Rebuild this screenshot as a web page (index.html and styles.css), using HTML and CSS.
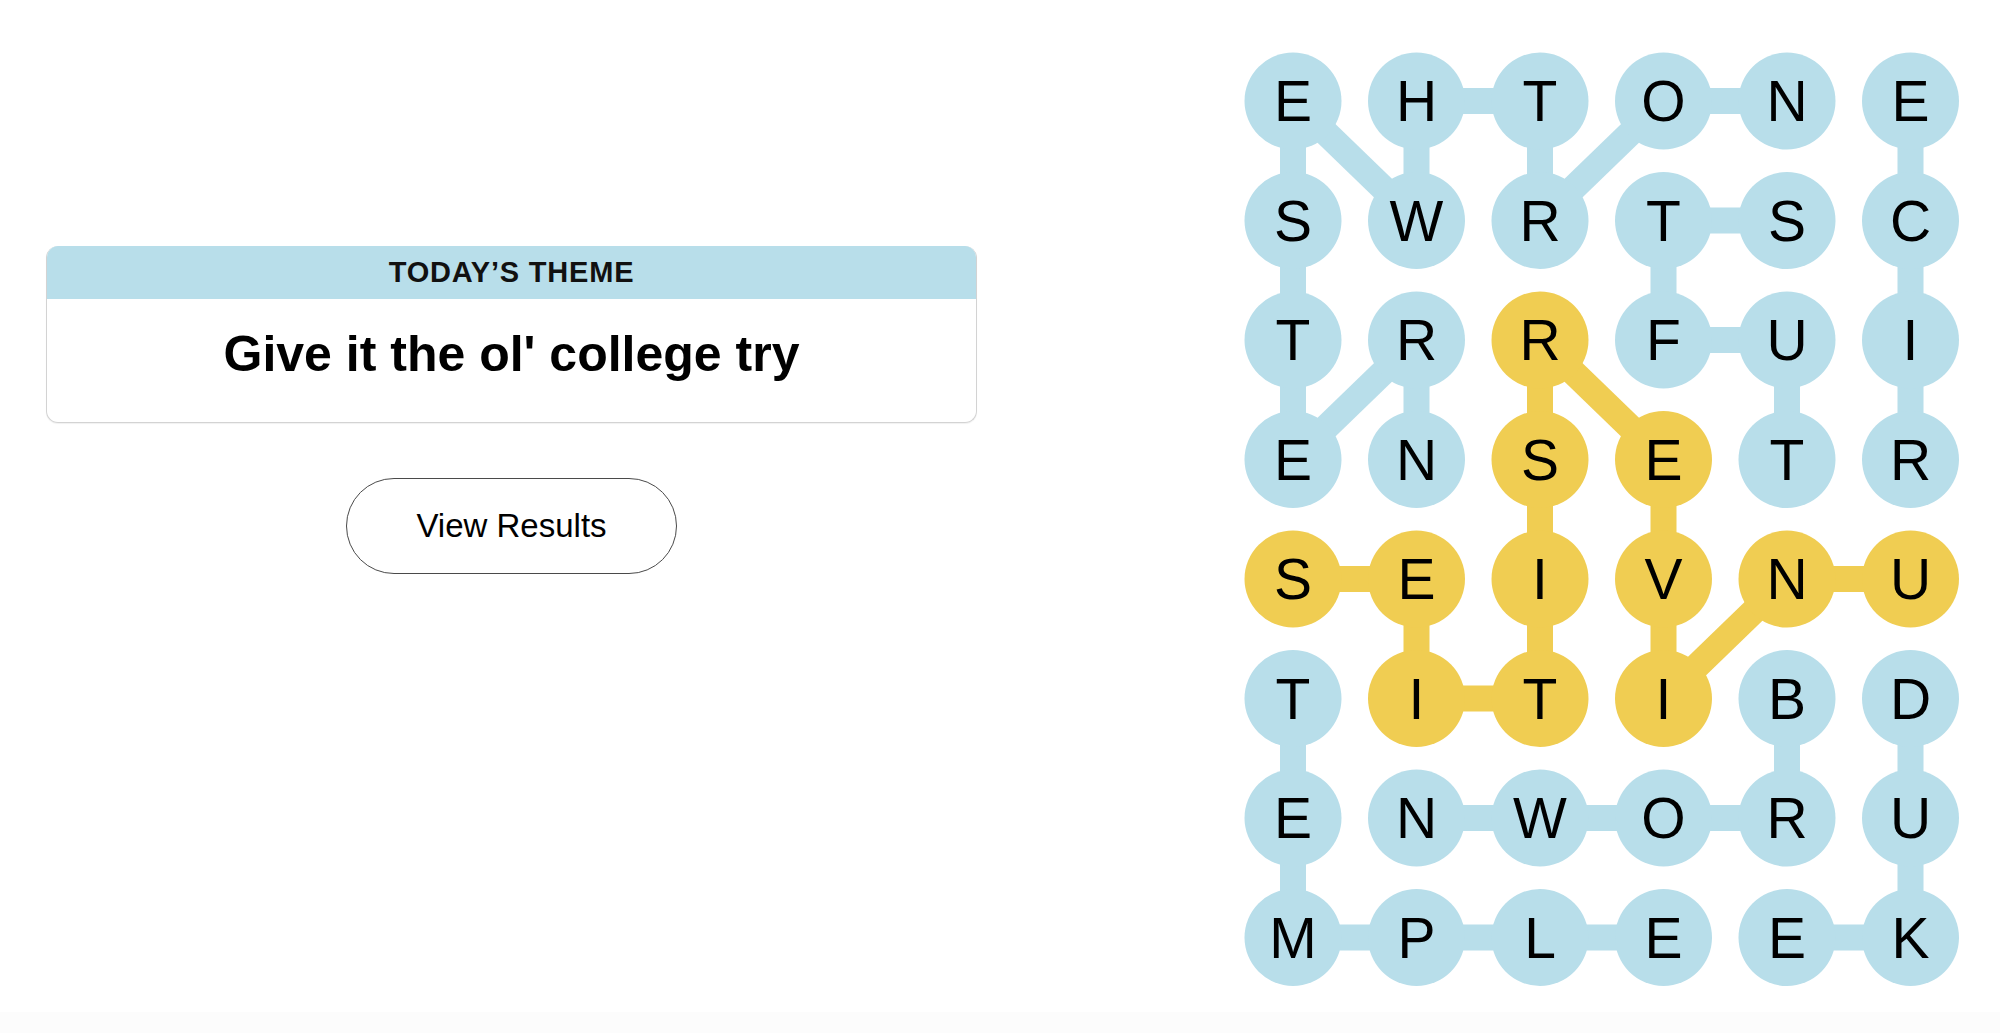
FILE: index.html
```html
<!DOCTYPE html>
<html lang="en">
<head>
<meta charset="utf-8">
<title>Strands</title>
<link rel="stylesheet" href="styles.css">
</head>
<body>
<main class="page">
  <section class="left">
    <div class="theme-card">
      <div class="theme-head">TODAY’S THEME</div>
      <div class="theme-body">Give it the ol' college try</div>
    </div>
    <button class="results-btn">View Results</button>
  </section>
  <section class="board">
    <svg class="board-svg" width="722" height="945" viewBox="0 0 722 945">
      <g class="links blue">
        <line x1="52" y1="52" x2="52" y2="171.5"/>
        <line x1="52" y1="52" x2="175.5" y2="171.5"/>
        <line x1="175.5" y1="52" x2="175.5" y2="171.5"/>
        <line x1="175.5" y1="52" x2="299" y2="52"/>
        <line x1="299" y1="52" x2="299" y2="171.5"/>
        <line x1="299" y1="171.5" x2="422.5" y2="52"/>
        <line x1="422.5" y1="52" x2="546" y2="52"/>
        <line x1="669.5" y1="52" x2="669.5" y2="171.5"/>
        <line x1="52" y1="171.5" x2="52" y2="291"/>
        <line x1="422.5" y1="171.5" x2="546" y2="171.5"/>
        <line x1="422.5" y1="171.5" x2="422.5" y2="291"/>
        <line x1="669.5" y1="171.5" x2="669.5" y2="291"/>
        <line x1="52" y1="291" x2="52" y2="410.5"/>
        <line x1="52" y1="410.5" x2="175.5" y2="291"/>
        <line x1="175.5" y1="291" x2="175.5" y2="410.5"/>
        <line x1="422.5" y1="291" x2="546" y2="291"/>
        <line x1="546" y1="291" x2="546" y2="410.5"/>
        <line x1="669.5" y1="291" x2="669.5" y2="410.5"/>
        <line x1="52" y1="649.5" x2="52" y2="769"/>
        <line x1="52" y1="769" x2="52" y2="888.5"/>
        <line x1="52" y1="888.5" x2="422.5" y2="888.5"/>
        <line x1="546" y1="888.5" x2="669.5" y2="888.5"/>
        <line x1="669.5" y1="649.5" x2="669.5" y2="888.5"/>
        <line x1="546" y1="649.5" x2="546" y2="769"/>
        <line x1="546" y1="769" x2="175.5" y2="769"/>
      </g>
      <g class="links gold">
        <line x1="669.5" y1="530" x2="546" y2="530"/>
        <line x1="546" y1="530" x2="422.5" y2="649.5"/>
        <line x1="422.5" y1="649.5" x2="422.5" y2="410.5"/>
        <line x1="422.5" y1="410.5" x2="299" y2="291"/>
        <line x1="299" y1="291" x2="299" y2="649.5"/>
        <line x1="299" y1="649.5" x2="175.5" y2="649.5"/>
        <line x1="175.5" y1="649.5" x2="175.5" y2="530"/>
        <line x1="175.5" y1="530" x2="52" y2="530"/>
      </g>
      <g class="cells">
        <circle class="blue" cx="52" cy="52" r="48.5"/><circle class="blue" cx="175.5" cy="52" r="48.5"/><circle class="blue" cx="299" cy="52" r="48.5"/><circle class="blue" cx="422.5" cy="52" r="48.5"/><circle class="blue" cx="546" cy="52" r="48.5"/><circle class="blue" cx="669.5" cy="52" r="48.5"/>
        <circle class="blue" cx="52" cy="171.5" r="48.5"/><circle class="blue" cx="175.5" cy="171.5" r="48.5"/><circle class="blue" cx="299" cy="171.5" r="48.5"/><circle class="blue" cx="422.5" cy="171.5" r="48.5"/><circle class="blue" cx="546" cy="171.5" r="48.5"/><circle class="blue" cx="669.5" cy="171.5" r="48.5"/>
        <circle class="blue" cx="52" cy="291" r="48.5"/><circle class="blue" cx="175.5" cy="291" r="48.5"/><circle class="gold" cx="299" cy="291" r="48.5"/><circle class="blue" cx="422.5" cy="291" r="48.5"/><circle class="blue" cx="546" cy="291" r="48.5"/><circle class="blue" cx="669.5" cy="291" r="48.5"/>
        <circle class="blue" cx="52" cy="410.5" r="48.5"/><circle class="blue" cx="175.5" cy="410.5" r="48.5"/><circle class="gold" cx="299" cy="410.5" r="48.5"/><circle class="gold" cx="422.5" cy="410.5" r="48.5"/><circle class="blue" cx="546" cy="410.5" r="48.5"/><circle class="blue" cx="669.5" cy="410.5" r="48.5"/>
        <circle class="gold" cx="52" cy="530" r="48.5"/><circle class="gold" cx="175.5" cy="530" r="48.5"/><circle class="gold" cx="299" cy="530" r="48.5"/><circle class="gold" cx="422.5" cy="530" r="48.5"/><circle class="gold" cx="546" cy="530" r="48.5"/><circle class="gold" cx="669.5" cy="530" r="48.5"/>
        <circle class="blue" cx="52" cy="649.5" r="48.5"/><circle class="gold" cx="175.5" cy="649.5" r="48.5"/><circle class="gold" cx="299" cy="649.5" r="48.5"/><circle class="gold" cx="422.5" cy="649.5" r="48.5"/><circle class="blue" cx="546" cy="649.5" r="48.5"/><circle class="blue" cx="669.5" cy="649.5" r="48.5"/>
        <circle class="blue" cx="52" cy="769" r="48.5"/><circle class="blue" cx="175.5" cy="769" r="48.5"/><circle class="blue" cx="299" cy="769" r="48.5"/><circle class="blue" cx="422.5" cy="769" r="48.5"/><circle class="blue" cx="546" cy="769" r="48.5"/><circle class="blue" cx="669.5" cy="769" r="48.5"/>
        <circle class="blue" cx="52" cy="888.5" r="48.5"/><circle class="blue" cx="175.5" cy="888.5" r="48.5"/><circle class="blue" cx="299" cy="888.5" r="48.5"/><circle class="blue" cx="422.5" cy="888.5" r="48.5"/><circle class="blue" cx="546" cy="888.5" r="48.5"/><circle class="blue" cx="669.5" cy="888.5" r="48.5"/>
      </g>
      <g class="letters">
        <text x="52" y="72">E</text><text x="175.5" y="72">H</text><text x="299" y="72">T</text><text x="422.5" y="72">O</text><text x="546" y="72">N</text><text x="669.5" y="72">E</text>
        <text x="52" y="191.5">S</text><text x="175.5" y="191.5">W</text><text x="299" y="191.5">R</text><text x="422.5" y="191.5">T</text><text x="546" y="191.5">S</text><text x="669.5" y="191.5">C</text>
        <text x="52" y="311">T</text><text x="175.5" y="311">R</text><text x="299" y="311">R</text><text x="422.5" y="311">F</text><text x="546" y="311">U</text><text x="669.5" y="311">I</text>
        <text x="52" y="430.5">E</text><text x="175.5" y="430.5">N</text><text x="299" y="430.5">S</text><text x="422.5" y="430.5">E</text><text x="546" y="430.5">T</text><text x="669.5" y="430.5">R</text>
        <text x="52" y="550">S</text><text x="175.5" y="550">E</text><text x="299" y="550">I</text><text x="422.5" y="550">V</text><text x="546" y="550">N</text><text x="669.5" y="550">U</text>
        <text x="52" y="669.5">T</text><text x="175.5" y="669.5">I</text><text x="299" y="669.5">T</text><text x="422.5" y="669.5">I</text><text x="546" y="669.5">B</text><text x="669.5" y="669.5">D</text>
        <text x="52" y="789">E</text><text x="175.5" y="789">N</text><text x="299" y="789">W</text><text x="422.5" y="789">O</text><text x="546" y="789">R</text><text x="669.5" y="789">U</text>
        <text x="52" y="908.5">M</text><text x="175.5" y="908.5">P</text><text x="299" y="908.5">L</text><text x="422.5" y="908.5">E</text><text x="546" y="908.5">E</text><text x="669.5" y="908.5">K</text>
      </g>
    </svg>
  </section>
</main>
<footer class="bottom-band"></footer>
</body>
</html>
```
FILE: styles.css
```css
html, body {
  margin: 0;
  padding: 0;
  background: #ffffff;
}

body {
  width: 2000px;
  height: 1033px;
  overflow: hidden;
  position: relative;
  font-family: "Liberation Sans", Arial, sans-serif;
  color: #000;
}

.page {
  display: flex;
  align-items: flex-start;
  padding: 49px 0 0 46px;
}

.left {
  width: 931px;
  padding-top: 197px;
  display: flex;
  flex-direction: column;
  align-items: center;
}

.theme-card {
  width: 931px;
  box-sizing: border-box;
  border: 1px solid #d3d3d3;
  border-top: none;
  border-radius: 12px;
  overflow: hidden;
  box-shadow: 0 1px 1px rgba(0, 0, 0, 0.06);
}

.theme-head {
  height: 53px;
  box-sizing: border-box;
  margin: 0 -1px;
  padding-top: 12px;
  background: #b8deea;
  text-align: center;
  font-weight: 700;
  font-size: 29px;
  line-height: 29px;
  letter-spacing: 0.8px;
  color: #111;
}

.theme-body {
  height: 123px;
  box-sizing: border-box;
  padding-top: 30px;
  text-align: center;
  font-weight: 700;
  font-size: 50px;
  line-height: 50px;
  color: #000;
}

.results-btn {
  margin-top: 55px;
  width: 331px;
  height: 96px;
  box-sizing: border-box;
  border: 1px solid #4a4a4a;
  border-radius: 48px;
  background: #fff;
  font-family: "Liberation Sans", Arial, sans-serif;
  font-size: 33px;
  color: #000;
  padding: 0;
  cursor: pointer;
}

.board {
  margin-left: 263.5px;
}

.board-svg {
  display: block;
}

.links line {
  stroke-width: 26;
  stroke-linecap: butt;
}

.links.blue line {
  stroke: #b8deea;
}

.links.gold line {
  stroke: #f0cd52;
}

.cells .blue {
  fill: #b8deea;
}

.cells .gold {
  fill: #f0cd52;
}

.letters text {
  font-family: "Liberation Sans", Arial, sans-serif;
  font-size: 57px;
  font-weight: 400;
  text-anchor: middle;
  fill: #000;
}

.bottom-band {
  position: absolute;
  left: 0;
  right: 0;
  bottom: 0;
  height: 21px;
  background: #fcfcfc;
}
```
